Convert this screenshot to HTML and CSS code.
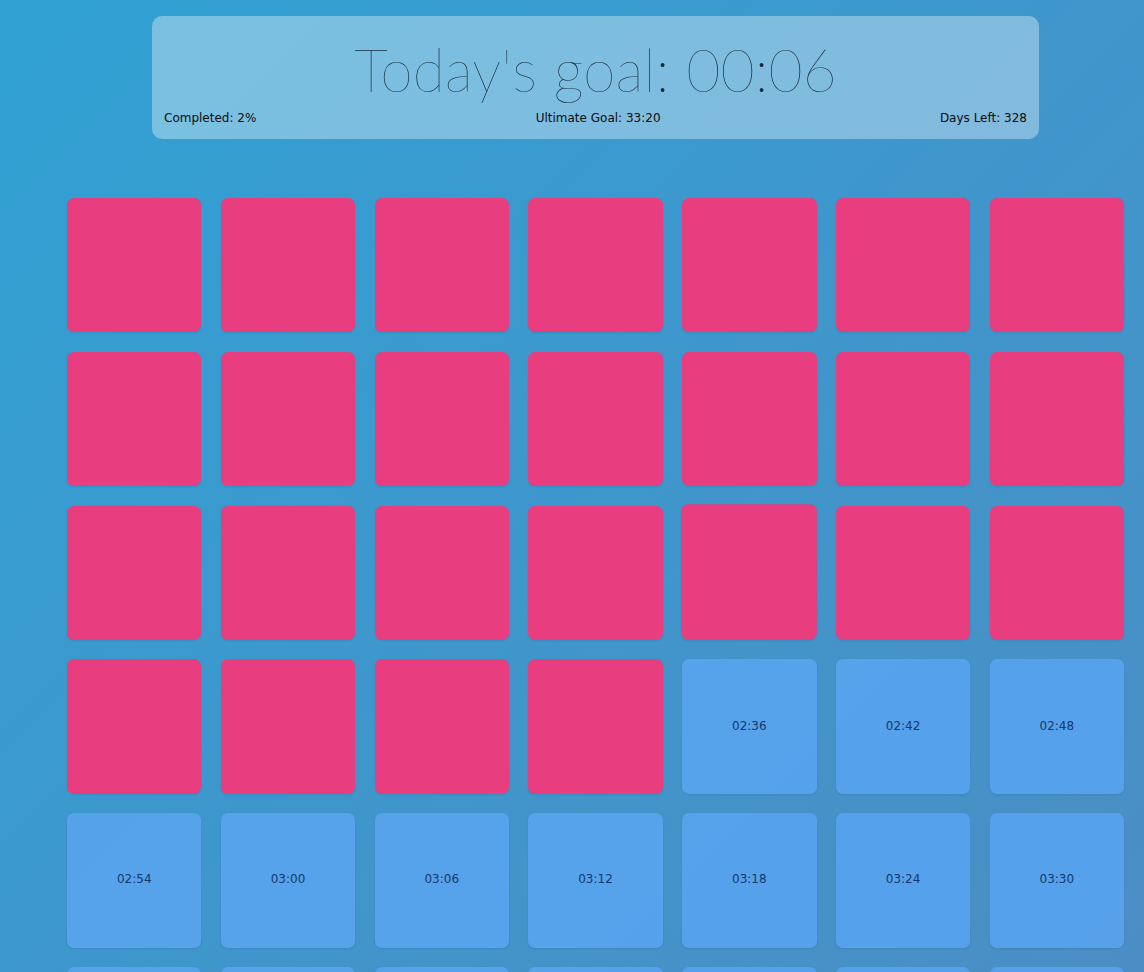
FILE: index.html
```html
<!DOCTYPE html>
<html>
<head>
<meta charset="utf-8">
<title>Goal</title>
<link rel="stylesheet" href="styles.css">
</head>
<body>
<div class="page">
  <header class="panel">
    <h1 class="title">Today's goal: 00:06</h1>
    <div class="stats">
      <span>Completed: 2%</span>
      <span>Ultimate Goal: 33:20</span>
      <span>Days Left: 328</span>
    </div>
  </header>
  <main class="grid">
    <div class="tile done"></div><div class="tile done"></div><div class="tile done"></div><div class="tile done"></div><div class="tile done"></div><div class="tile done"></div><div class="tile done"></div>
    <div class="tile done"></div><div class="tile done"></div><div class="tile done"></div><div class="tile done"></div><div class="tile done"></div><div class="tile done"></div><div class="tile done"></div>
    <div class="tile done"></div><div class="tile done"></div><div class="tile done"></div><div class="tile done"></div><div class="tile done hover"></div><div class="tile done"></div><div class="tile done"></div>
    <div class="tile done"></div><div class="tile done"></div><div class="tile done"></div><div class="tile done"></div><div class="tile">02:36</div><div class="tile">02:42</div><div class="tile">02:48</div>
    <div class="tile">02:54</div><div class="tile">03:00</div><div class="tile">03:06</div><div class="tile">03:12</div><div class="tile">03:18</div><div class="tile">03:24</div><div class="tile">03:30</div>
    <div class="tile">03:36</div><div class="tile">03:42</div><div class="tile">03:48</div><div class="tile">03:54</div><div class="tile">04:00</div><div class="tile">04:06</div><div class="tile">04:12</div>
  </main>
</div>
</body>
</html>
```

FILE: styles.css
```css
html {
  overflow: hidden;
}
body {
  margin: 0;
  min-height: 100vh;
  background: linear-gradient(135deg, #30a1d3 0%, #3e97cc 50%, #4b8ec5 100%) fixed;
  font-family: "DejaVu Sans", "Liberation Sans", sans-serif;
}
.page {
  width: 1191px;
  display: flex;
  flex-direction: column;
  align-items: center;
  padding-top: 16px;
}
.panel {
  width: 887px;
  box-sizing: border-box;
  height: 123px;
  padding: 0 12px;
  border-radius: 10px;
  background: rgba(255, 255, 255, 0.35);
  display: flex;
  flex-direction: column;
}
.title {
  margin: 0;
  padding-top: 24px;
  height: 84px;
  box-sizing: border-box;
  text-align: center;
  font-family: Lato, "Open Sans", sans-serif;
  font-weight: 100;
  font-size: 59px;
  line-height: 60px;
  color: #16293a;
  white-space: nowrap;
}
.stats {
  display: flex;
  justify-content: space-between;
  font-size: 12px;
  color: #0c0c0c;
  line-height: 18px;
  padding-top: 9px;
}
.grid {
  margin-top: 59px;
  width: 1057px;
  display: grid;
  grid-template-columns: repeat(7, 1fr);
  gap: 19.3px;
}
.tile {
  aspect-ratio: 1 / 1;
  box-sizing: border-box;
  padding-bottom: 2px;
  border-radius: 7px;
  background: rgba(88, 163, 238, 0.92);
  color: #15396a;
  font-size: 12px;
  display: flex;
  align-items: center;
  justify-content: center;
  box-shadow: 0 1px 2px rgba(20, 60, 110, 0.12);
}
.tile.done {
  background: #e83d7e;
}
.tile.hover {
  transform: translateY(-1px) scale(1.012);
}
```
